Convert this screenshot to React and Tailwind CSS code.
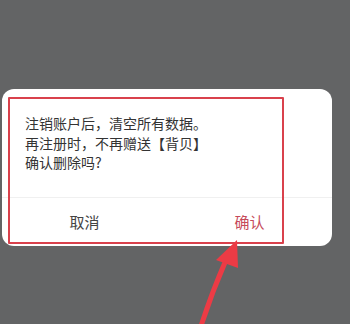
import React from 'react';

const font = { fontFamily: '"Noto Sans CJK SC", "Noto Sans", sans-serif' };

const App = () => {
  return (
    <div className="relative w-[350px] h-[324px] overflow-hidden bg-[#636465]" style={font}>
      <div className="pt-[89px] pl-[2px]">
        <div className="w-[330px] h-[157px] bg-white rounded-[12px] flex flex-col">
          <div className="pt-[25px] pl-[23px] h-[108px] text-[14px] leading-[19.5px] text-[#333]">
            <p>注销账户后，清空所有数据。</p>
            <p>再注册时，不再赠送【背贝】</p>
            <p>确认删除吗?</p>
          </div>
          <div className="flex flex-1 border-t border-[#f0f0f0]">
            <button className="flex-1 text-[15px] text-[#444]">取消</button>
            <button className="flex-1 text-[15px] text-[#c64a5a]">确认</button>
          </div>
        </div>
      </div>

      {/* annotation */}
      <div className="absolute left-[8px] top-[97px] w-[276px] h-[147px] border-2 border-[#d9414c] rounded-[1px]" />
      <svg className="absolute left-0 top-0" width="350" height="324" viewBox="0 0 350 324">
        <path d="M201 326 Q212 292 226 260" stroke="#ec3b45" strokeWidth="5" fill="none" strokeLinecap="round" />
        <polygon points="237,240 216,260 238,268" fill="#ec3b45" />
      </svg>
    </div>
  );
};

export default App;
